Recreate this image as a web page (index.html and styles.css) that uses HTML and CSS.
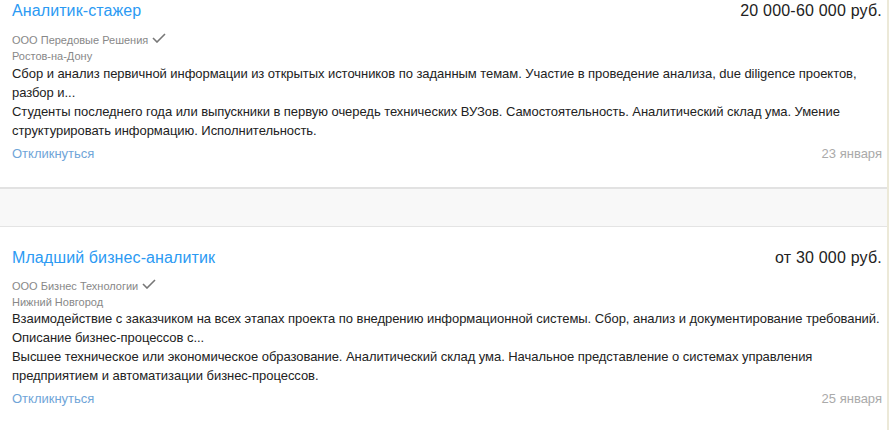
FILE: index.html
```html
<!DOCTYPE html>
<html lang="ru">
<head>
<meta charset="utf-8">
<link rel="stylesheet" href="styles.css">
</head>
<body>
<div class="list">
  <div class="card card--first">
    <div class="head">
      <a class="title" href="#">Аналитик-стажер</a>
      <div class="salary">20 000-60 000 руб.</div>
    </div>
    <div class="company">ООО Передовые Решения <svg class="check" width="14" height="10" viewBox="0 0 14 10"><path d="M1 5 L5 9 L13 1" fill="none" stroke="#777" stroke-width="1.6"/></svg></div>
    <div class="city">Ростов-на-Дону</div>
    <div class="desc">Сбор и анализ первичной информации из открытых источников по заданным темам. Участие в проведение анализа, due diligence проектов, разбор и...</div>
    <div class="desc">Студенты последнего года или выпускники в первую очередь технических ВУЗов. Самостоятельность. Аналитический склад ума. Умение структурировать информацию. Исполнительность.</div>
    <div class="foot">
      <a class="reply" href="#">Откликнуться</a>
      <span class="date">23 января</span>
    </div>
  </div>
  <div class="gap"></div>
  <div class="card">
    <div class="head">
      <a class="title" href="#">Младший бизнес-аналитик</a>
      <div class="salary">от 30 000 руб.</div>
    </div>
    <div class="company">ООО Бизнес Технологии <svg class="check" width="14" height="10" viewBox="0 0 14 10"><path d="M1 5 L5 9 L13 1" fill="none" stroke="#777" stroke-width="1.6"/></svg></div>
    <div class="city">Нижний Новгород</div>
    <div class="desc">Взаимодействие с заказчиком на всех этапах проекта по внедрению информационной системы. Сбор, анализ и документирование требований. Описание бизнес-процессов с...</div>
    <div class="desc">Высшее техническое или экономическое образование. Аналитический склад ума. Начальное представление о системах управления предприятием и автоматизации бизнес-процессов.</div>
    <div class="foot">
      <a class="reply" href="#">Откликнуться</a>
      <span class="date">25 января</span>
    </div>
  </div>
</div>
</body>
</html>
```
FILE: styles.css
```css
html, body {
  margin: 0;
  padding: 0;
}
body {
  background: #ece9d8;
  font-family: "Liberation Sans", Arial, sans-serif;
  color: #222;
  overflow: hidden;
  height: 430px;
}
.list {
  width: 887px;
  background: #f8f8f8;
  height: 430px;
}
.card {
  background: #fff;
  padding: 20px 5px 24px 12px;
  border-top: 1px solid #e4e4e4;
}
.card--first {
  padding-top: 0;
  border-top: none;
  border-bottom: 2px solid #e2e2e2;
}
.gap {
  height: 37px;
}
.head {
  display: flex;
  justify-content: space-between;
  align-items: baseline;
  height: 22px;
  line-height: 22px;
  margin-bottom: 9px;
}
.card--first .head {
  margin-bottom: 10px;
}
.title {
  font-size: 16px;
  letter-spacing: 0.1px;
  color: #2b9af3;
  text-decoration: none;
}
.salary {
  font-size: 16px;
  letter-spacing: 0.2px;
  color: #222;
}
.company, .city {
  font-size: 11px;
  line-height: 16px;
  color: #888;
}
.company {
  display: flex;
  align-items: center;
  gap: 4px;
}
.check {
  margin-top: -4px;
}
.desc {
  font-size: 13px;
  line-height: 19px;
  color: #222;
  letter-spacing: -0.05px;
}
.city + .desc {
  margin-top: -1px;
}
.card--first .city + .desc {
  margin-top: 0;
}
.foot {
  display: flex;
  justify-content: space-between;
  font-size: 13px;
  line-height: 19px;
  margin-top: 4px;
}
.reply {
  color: #6fa5d8;
  text-decoration: none;
}
.date {
  color: #aaa;
}
```
